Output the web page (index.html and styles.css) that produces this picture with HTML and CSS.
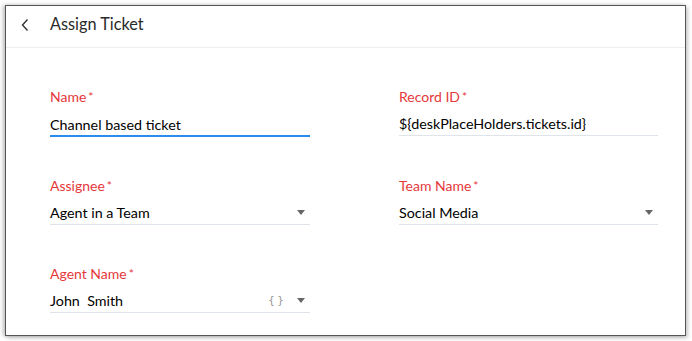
FILE: index.html
```html
<html>
<head>
<meta name="viewport" content="width=device-width, initial-scale=1">
<title>Assign Ticket</title>
<link rel="stylesheet" href="styles.css">
</head>
<body>
<div class="frame">
	<div class="header">
		<svg class="back" width="10" height="14" viewBox="0 0 10 14"><path d="M7.5 1.5 L2.5 7 L7.5 12.5" fill="none" stroke="#333" stroke-width="1.4"/></svg>
		<span class="title">Assign Ticket</span>
	</div>
	<div class="form">
		<div class="field">
			<div class="label">Name<span class="req">*</span></div>
			<div class="input active"><span>Channel based ticket</span></div>
		</div>
		<div class="field">
			<div class="label">Record ID<span class="req">*</span></div>
			<div class="input"><span>${deskPlaceHolders.tickets.id}</span></div>
		</div>
		<div class="field">
			<div class="label">Assignee<span class="req">*</span></div>
			<div class="input"><span>Agent in a Team</span><span class="arrow"></span></div>
		</div>
		<div class="field">
			<div class="label">Team Name<span class="req">*</span></div>
			<div class="input"><span>Social Media</span><span class="arrow"></span></div>
		</div>
		<div class="field">
			<div class="label">Agent Name<span class="req">*</span></div>
			<div class="input"><span>John&nbsp; Smith</span><span class="braces">{}</span><span class="arrow"></span></div>
		</div>
	</div>
</div>
</body>
</html>
```

FILE: styles.css
```css
body {
  margin: 0;
  background: #fff;
  font-family: Lato, "Noto Sans", sans-serif;
  color: #222;
}

.frame {
  margin: 5px 0 0 5px;
  width: 679px;
  height: 329px;
  border: 1px solid #555;
  box-shadow: -2px 0 4px rgba(0,0,0,0.25), 2px 2px 4px rgba(0,0,0,0.2);
  background: #fff;
}

.header {
  height: 41px;
  border-bottom: 1px solid #eceef0;
  display: flex;
  align-items: center;
}

.back {
  margin-left: 14px;
  margin-top: -3px;
}

.title {
  margin-left: 20px;
  margin-top: -6px;
  font-size: 16.3px;
  color: #2a2a2a;
}

.form {
  display: grid;
  grid-template-columns: 260px 259px;
  column-gap: 89px;
  row-gap: 39px;
  padding: 39px 0 0 44px;
}

.label {
  font-size: 14px;
  line-height: 20px;
  color: #e5383b;
}

.req {
  font-size: 12px;
  vertical-align: top;
  margin-left: 2px;
}

.input {
  margin-top: 5px;
  height: 24px;
  border-bottom: 1px solid #dfe4ea;
  display: flex;
  align-items: center;
  font-size: 14.3px;
  color: #000;
  box-sizing: border-box;
}

.input span:first-child {
  flex: 1;
}

.input.active {
  border-bottom: 2px solid #2b8cf0;
  height: 25px;
  padding-top: 1px;
}

.arrow {
  width: 0;
  height: 0;
  border-left: 4px solid transparent;
  border-right: 4px solid transparent;
  border-top: 5px solid #666;
  margin-right: 5px;
}

.braces {
  font-family: "DejaVu Sans", sans-serif;
  font-size: 11px;
  letter-spacing: 2px;
  color: #999;
  margin-right: 11px;
}
```
